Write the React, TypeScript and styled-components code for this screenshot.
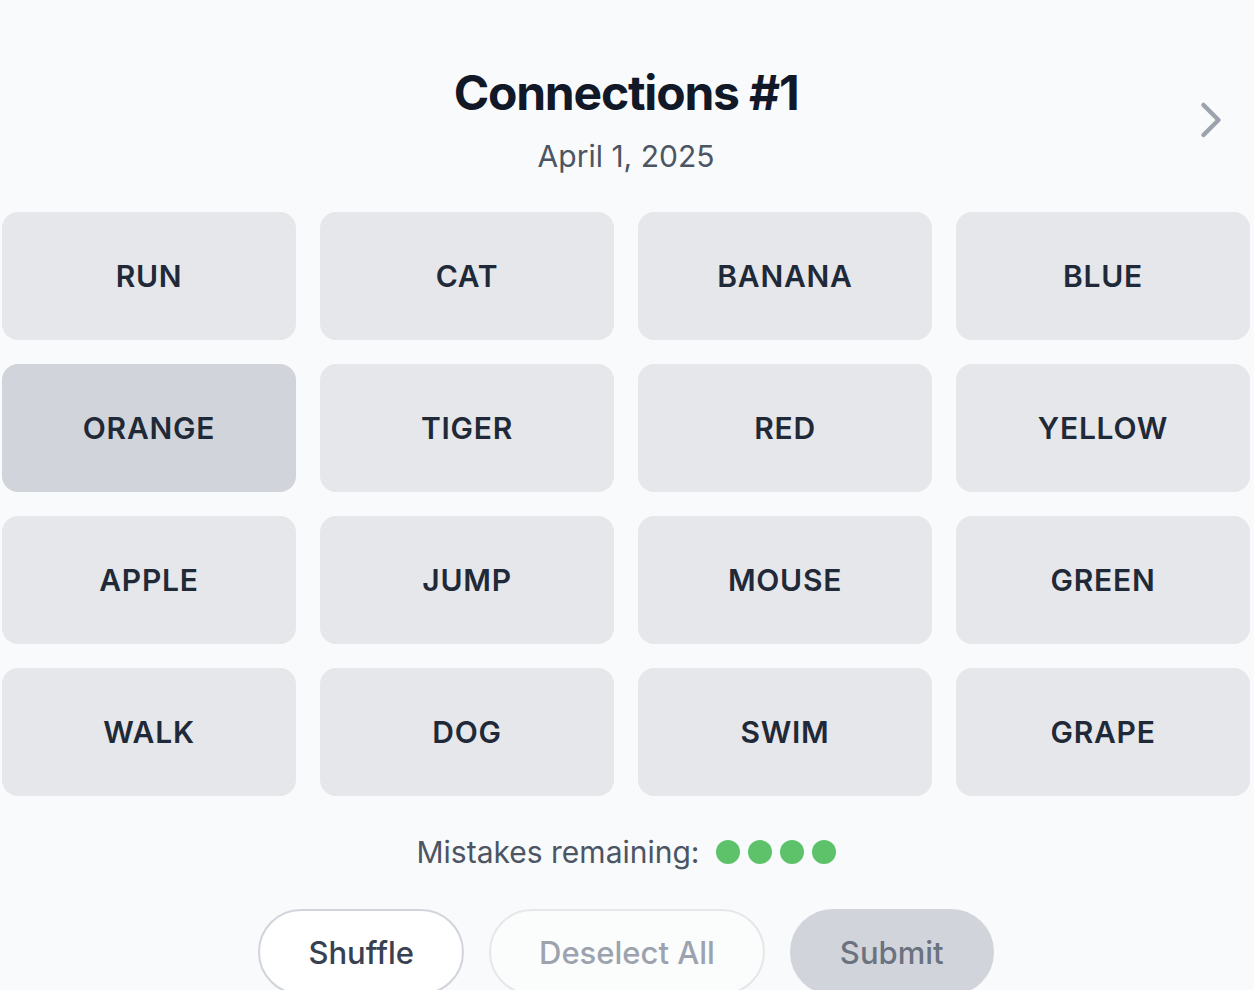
import React, { useState } from "react";
import styled, { createGlobalStyle } from "styled-components";
import { ChevronRight } from "lucide-react";

const GlobalStyle = createGlobalStyle`
  html, body {
    margin: 0;
    padding: 0;
    background: #f9fafb;
    font-family: Inter, "Noto Sans", sans-serif;
    overflow: hidden;
  }
`;

const Page = styled.div`
  width: 1254px;
  height: 990px;
  padding: 0 4px 0 2px;
  box-sizing: border-box;
  display: flex;
  flex-direction: column;
  align-items: center;
`;

const Header = styled.header`
  position: relative;
  width: 100%;
  display: flex;
  flex-direction: column;
  align-items: center;
  padding-top: 64px;
`;

const Title = styled.h1`
  margin: 0;
  font-size: 48px;
  line-height: 58px;
  font-weight: 700;
  letter-spacing: -0.025em;
  color: #111827;
`;

const DateLine = styled.p`
  margin: 14px 0 0;
  font-size: 30px;
  line-height: 40px;
  color: #4b5563;
`;

const NextButton = styled.button`
  position: absolute;
  right: 9px;
  top: 90px;
  width: 60px;
  height: 60px;
  padding: 0;
  border: none;
  background: transparent;
  color: #9ca3af;
  display: flex;
  align-items: center;
  justify-content: center;
  cursor: pointer;
`;

const Grid = styled.div`
  margin-top: 36px;
  width: 100%;
  display: grid;
  grid-template-columns: repeat(4, 1fr);
  gap: 24px;
`;

const Tile = styled.button<{ $selected?: boolean }>`
  height: 128px;
  border: none;
  border-radius: 16px;
  background: ${(p) => (p.$selected ? "#d1d5db" : "#e5e7eb")};
  color: #1f2937;
  font-family: Inter, "Noto Sans", sans-serif;
  font-size: 30px;
  font-weight: 600;
  letter-spacing: 0.025em;
  text-transform: uppercase;
  cursor: pointer;
`;

const Mistakes = styled.div`
  margin-top: 36px;
  display: flex;
  align-items: center;
  gap: 16px;
  font-size: 30px;
  line-height: 40px;
  color: #4b5563;
`;

const Dots = styled.div`
  display: flex;
  gap: 8px;
`;

const Dot = styled.span`
  width: 24px;
  height: 24px;
  border-radius: 50%;
  background: #5ec26a;
`;

const Actions = styled.div`
  margin-top: 37px;
  display: flex;
  gap: 25px;
`;

const Pill = styled.button<{ $variant: "outline" | "disabled" | "solid" }>`
  height: 86px;
  padding: 0 48px;
  border-radius: 9999px;
  font-family: Inter, "Noto Sans", sans-serif;
  font-size: 31px;
  font-weight: 500;
  cursor: pointer;
  border: 2px solid
    ${(p) => (p.$variant === "outline" ? "#d1d5db" : p.$variant === "disabled" ? "#e5e7eb" : "#d1d5db")};
  background: ${(p) => (p.$variant === "outline" ? "#ffffff" : p.$variant === "disabled" ? "#fbfcfc" : "#d1d5db")};
  color: ${(p) => (p.$variant === "outline" ? "#374151" : p.$variant === "disabled" ? "#9ca3af" : "#6b7280")};
`;

const words = [
  "RUN", "CAT", "BANANA", "BLUE",
  "ORANGE", "TIGER", "RED", "YELLOW",
  "APPLE", "JUMP", "MOUSE", "GREEN",
  "WALK", "DOG", "SWIM", "GRAPE",
];

export default function App() {
  const [selected, setSelected] = useState<string[]>(["ORANGE"]);
  const toggle = (w: string) =>
    setSelected((s) => (s.includes(w) ? s.filter((x) => x !== w) : s.length < 4 ? [...s, w] : s));

  return (
    <>
      <GlobalStyle />
      <Page>
        <Header>
          <Title>Connections #1</Title>
          <DateLine>April 1, 2025</DateLine>
          <NextButton aria-label="Next puzzle">
            <ChevronRight size={60} strokeWidth={1.8} />
          </NextButton>
        </Header>
        <Grid>
          {words.map((w) => (
            <Tile key={w} $selected={selected.includes(w)} onClick={() => toggle(w)}>
              {w}
            </Tile>
          ))}
        </Grid>
        <Mistakes>
          Mistakes remaining:
          <Dots>
            {[0, 1, 2, 3].map((i) => (
              <Dot key={i} />
            ))}
          </Dots>
        </Mistakes>
        <Actions>
          <Pill $variant="outline">Shuffle</Pill>
          <Pill $variant="disabled" onClick={() => setSelected([])}>Deselect All</Pill>
          <Pill $variant="solid">Submit</Pill>
        </Actions>
      </Page>
    </>
  );
}
